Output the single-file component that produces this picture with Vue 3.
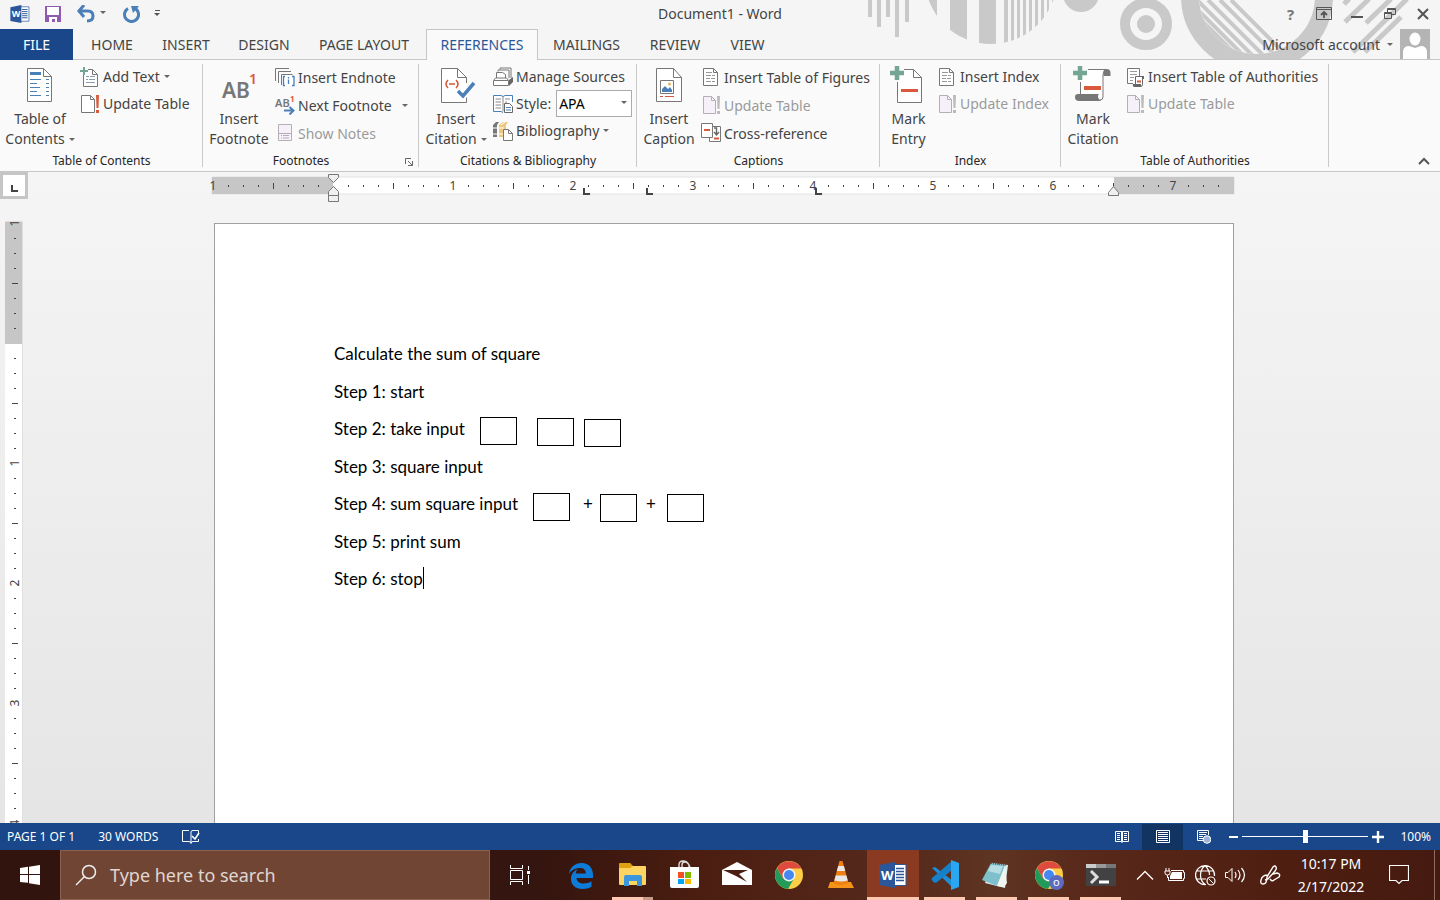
<script setup>
import { ref } from 'vue'

const zoom = ref(50)
const citationStyle = ref('APA')

const tabs = [
  { label: 'HOME', width: 74 },
  { label: 'INSERT', width: 74 },
  { label: 'DESIGN', width: 82 },
  { label: 'PAGE LAYOUT', width: 118 },
  { label: 'REFERENCES', width: 112, active: true },
  { label: 'MAILINGS', width: 97 },
  { label: 'REVIEW', width: 80 },
  { label: 'VIEW', width: 65 },
]

const groups = [
  {
    name: 'Table of Contents', width: 203, bigWidth: 80, rowHeight: 27,
    big: { icon: 'toc', lines: ['Table of', 'Contents'], drop: true },
    items: [
      { icon: 'add-text', label: 'Add Text', drop: true },
      { icon: 'update', label: 'Update Table' },
    ],
  },
  {
    name: 'Footnotes', width: 216, bigWidth: 72, rowHeight: 28, launcher: true,
    big: { icon: 'footnote', lines: ['Insert', 'Footnote'] },
    items: [
      { icon: 'endnote', label: 'Insert Endnote' },
      { icon: 'next-note', label: 'Next Footnote', drop: true, spaced: true },
      { icon: 'show-notes', label: 'Show Notes', disabled: true },
    ],
  },
  {
    name: 'Citations & Bibliography', width: 218, bigWidth: 74, rowHeight: 27,
    big: { icon: 'citation', lines: ['Insert', 'Citation'], drop: true },
    items: [
      { icon: 'sources', label: 'Manage Sources' },
      { icon: 'style', label: 'Style:', select: true },
      { icon: 'biblio', label: 'Bibliography', drop: true },
    ],
  },
  {
    name: 'Captions', width: 243, bigWidth: 64, rowHeight: 28,
    big: { icon: 'caption', lines: ['Insert', 'Caption'] },
    items: [
      { icon: 'lined-page', label: 'Insert Table of Figures' },
      { icon: 'update-off', label: 'Update Table', disabled: true },
      { icon: 'cross-ref', label: 'Cross-reference' },
    ],
  },
  {
    name: 'Index', width: 181, bigWidth: 57, rowHeight: 27,
    big: { icon: 'entry', lines: ['Mark', 'Entry'] },
    items: [
      { icon: 'lined-page', label: 'Insert Index' },
      { icon: 'update-off', label: 'Update Index', disabled: true },
    ],
  },
  {
    name: 'Table of Authorities', width: 268, bigWidth: 64, rowHeight: 27,
    big: { icon: 'mark-citation', lines: ['Mark', 'Citation'] },
    items: [
      { icon: 'authorities', label: 'Insert Table of Authorities' },
      { icon: 'update-off', label: 'Update Table', disabled: true },
    ],
  },
]

const letters = {
  footnote: [
    { t: 'AB', x: 3, y: 33, size: 21, fill: '#777', weight: 600 },
    { t: '1', x: 30, y: 19, size: 14, fill: '#d8593b', weight: 600 },
  ],
  'next-note': [
    { t: 'AB', x: 0, y: 12, size: 11, fill: '#777', weight: 600 },
    { t: '1', x: 15, y: 7, size: 8, fill: '#d8593b', weight: 700 },
  ],
  word: [{ t: 'W', x: 4, y: 21, size: 13, fill: '#fff', weight: 700 }],
  'chrome-user': [{ t: 'o', x: 20, y: 27, size: 11, fill: '#fff', weight: 400 }],
}

function marks(from, to) {
  const list = []
  for (let j = from; j <= to; j++) {
    if (j === 0) continue
    list.push({
      pos: j * 15,
      kind: j % 8 === 0 ? 'number' : j % 4 === 0 ? 'half' : 'dot',
      label: Math.abs(j / 8),
    })
  }
  return list
}
const hMarks = marks(-8, 59)
const vMarks = marks(-8, 32)
const tabStops = [379, 442, 611]

const lines = [
  'Calculate the sum of square',
  'Step 1: start',
  'Step 2: take input',
  'Step 3: square input',
  'Step 4: sum square input',
  'Step 5: print sum',
  'Step 6: stop',
]
const shapes = [
  { x: 146, y: 75 }, { x: 203, y: 76 }, { x: 250, y: 77 },
  { x: 199, y: 151 }, { x: 266, y: 152 }, { x: 333, y: 152 },
]

const apps = [
  { id: 'edge', name: 'Microsoft Edge' },
  { id: 'explorer', name: 'File Explorer', open: true, stacked: true },
  { id: 'store', name: 'Microsoft Store' },
  { id: 'mail', name: 'Mail' },
  { id: 'chrome', name: 'Google Chrome' },
  { id: 'vlc', name: 'VLC media player' },
  { id: 'word', name: 'Word', open: true, active: true },
  { id: 'code', name: 'Visual Studio Code', open: true },
  { id: 'notepad', name: 'Notepad', open: true },
  { id: 'chrome-user', name: 'Google Chrome profile', open: true },
  { id: 'terminal', name: 'Terminal', open: true },
]
const tray = [
  { id: 'up', name: 'Show hidden icons', width: 30 },
  { id: 'battery', name: 'Battery', width: 30 },
  { id: 'globe', name: 'Network', width: 30 },
  { id: 'sound', name: 'Volume', width: 32 },
  { id: 'pen', name: 'Ink workspace', width: 36 },
]
</script>

<template>
  <div class="window">
    <svg class="symbols" aria-hidden="true">
      <symbol id="toc" viewBox="0 0 40 40"><path d="M7.500 3.500h16l8 8v25h-24z" fill="#fff" stroke="#777"/><path d="M23.500 3.500v8h8" fill="none" stroke="#777"/><path d="M10 7h11v3H10z" fill="#4a7fb8"/><path d="M10 14.500h11M10 18.500h7M10 22.500h10M10 26.500h7M10 30.500h11M26 14.500h3M26 18.500h3M26 22.500h3M26 26.500h3M26 30.500h3" stroke="#4a7fb8"/></symbol>
      <symbol id="citation" viewBox="0 0 40 40"><path d="M30.500 18v-5.500l-9-9h-16v34h25v-5" fill="#fff" stroke="#777"/><path d="M21.500 3.500v9h9" fill="none" stroke="#777"/><path d="M12 15q-4 4 0 8M20 15q4 4 0 8M13 19h6" fill="none" stroke="#d8593b" stroke-width="1.600"/><path d="M22 26l5 5 11-13" fill="none" stroke="#4a7fb8" stroke-width="3.500"/></symbol>
      <symbol id="caption" viewBox="0 0 40 40"><path d="M7.500 3.500h17l8 9v24h-25z" fill="#fff" stroke="#777"/><path d="M24.500 3.500v9h8" fill="none" stroke="#777"/><path d="M11.500 15.500h13v13h-13z" fill="#fff" stroke="#777"/><circle cx="20.500" cy="19" r="1.600" fill="#e9b665"/><path d="M13 27v-3l3-3 3 3 2-2 2 3v2z" fill="#4a7fb8"/><path d="M11 31.500h3M16 31.500h9" stroke="#d8593b"/></symbol>
      <symbol id="entry" viewBox="0 0 40 40"><path d="M8.500 17v20.500h24v-25l-8-8H15" fill="#fff" stroke="#777"/><path d="M24.500 4.500v8h8" fill="none" stroke="#777"/><path d="M8 1v14M1 8h14" stroke="#75a593" stroke-width="4.500"/><path d="M12 24h17v3H12z" fill="#d8593b"/></symbol>
      <symbol id="mark-citation" viewBox="0 0 40 40"><path d="M7.500 17v15h19q4 0 4-5V4.500H15z" fill="#fff"/><path d="M7.500 17v13M15 4.500h18q-3 2-3 5V32q0 3-3 3" fill="none" stroke="#777"/><path d="M30.500 11V7q0-3 3-3 4 0 4 4v3z" fill="#777"/><path d="M5 29h21q-3 3 2 7H6q-4 0-4-4 0-3 3-3z" fill="#777"/><path d="M7 1v14M0 8h14" stroke="#75a593" stroke-width="4.500"/><path d="M11 21h17v4H11z" fill="#d8593b"/></symbol>

      <symbol id="add-text" viewBox="0 0 20 20"><path d="M3.500 8v11.500h14v-12l-5-5H8" fill="#fff" stroke="#777"/><path d="M12.500 2.500v5h5" fill="none" stroke="#777"/><path d="M6 9.500h3M10 9.500h5M6 12.500h2M9 12.500h6M6 15.500h9" stroke="#8d9cad"/><path d="M4 0v8M0 4h8" stroke="#75a593" stroke-width="2"/></symbol>
      <symbol id="update" viewBox="0 0 20 20"><path d="M1.500 1.500h9l4 4v13h-13z" fill="#fff" stroke="#777"/><path d="M10.500 1.500v4h4" fill="none" stroke="#777"/><path d="M16 1h3l-.5 13h-2z" fill="#d8593b"/><path d="M16 16h3v3h-3z" fill="#d8593b"/></symbol>
      <symbol id="update-off" viewBox="0 0 20 20"><path d="M2.500 1.500h8l4 4v13h-12z" fill="#f6f0f8" stroke="#b5aeb8"/><path d="M10.500 1.500v4h4" fill="none" stroke="#b5aeb8"/><path d="M16 1h3l-.5 13h-2z" fill="#bbb"/><path d="M16 16h3v3h-3z" fill="#bbb"/></symbol>
      <symbol id="endnote" viewBox="0 0 20 20"><path d="M.5 14V1.500H14M3.500 16V4.500H16M6.500 18V7.500h11" fill="none" stroke="#777"/><path d="M7 8h11v11H7z" fill="#fff"/><path d="M10 9.500H8.500v9H10M17 9.500h2v9h-2M13.500 10v1.500M13.500 12.500V17" fill="none" stroke="#4a7fb8" stroke-width="1.300"/></symbol>
      <symbol id="next-note" viewBox="0 0 20 20"><path d="M9 15.500h9M14.500 12L18.500 15.500l-4 4" fill="none" stroke="#4a7fb8" stroke-width="2"/></symbol>
      <symbol id="show-notes" viewBox="0 0 20 20"><path d="M3.500 1.500h13v16h-13z" fill="#f6f0f8" stroke="#b5aeb8"/><path d="M4 10.500h12M6 12.500h1M8 12.500h6M6 15h1M8 15h6" stroke="#b5aeb8"/></symbol>
      <symbol id="sources" viewBox="0 0 20 20"><path d="M7 2.500V1h11v10M5 4.500V3h11v8" fill="none" stroke="#777"/><path d="M3.500 11V5.500h6l3 2V11" fill="#fff" stroke="#777"/><path d="M.5 18.500v-5l2-2.500h11l2 2.500v5zM1 13.500h14" fill="#fff" stroke="#777"/><path d="M16 13l4-3v5l-4 4z" fill="#666"/></symbol>
      <symbol id="style" viewBox="0 0 20 20"><path d="M10 18.500l-2-1H.5v-16H8l2 1 2-1h7.500V8" fill="#fff" stroke="#4a7fb8"/><path d="M10 2.500v15M2.500 5H8M2.500 8H8M2.500 11H8M2.500 14H8M12 5h5M12 8h2" fill="none" stroke="#888"/><path d="M11.500 9.500h5l3 3v6h-8z" fill="#fff" stroke="#666"/><path d="M13 13.500h5M13 16h5" stroke="#4a7fb8"/></symbol>
      <symbol id="biblio" viewBox="0 0 20 20"><path d="M0 4l3-3h3L4 4v12H0z" fill="#777"/><path d="M0 7h5M0 13h5" stroke="#fff"/><path d="M6 4l4-3h5l-2 3v12H6z" fill="#efc67e"/><path d="M6 7h5M6 13h5M8 4l4-3" stroke="#fff"/><path d="M10.500 8.500h5l4 4v7h-9z" fill="#fff" stroke="#777"/><path d="M15.500 8.500v4h4" fill="none" stroke="#777"/></symbol>
      <symbol id="lined-page" viewBox="0 0 20 20"><path d="M2.500 1.500h10l4 4v13h-14z" fill="#fff" stroke="#777"/><path d="M12.500 1.500v4h4" fill="none" stroke="#777"/><path d="M5 5.500h6M5 8.500h5M11 8.500h3M5 11.500h4M10 11.500h4M5 14.500h5M11 14.500h3" stroke="#999"/></symbol>
      <symbol id="cross-ref" viewBox="0 0 20 20"><path d="M8.500 18.500v-15h11v15z" fill="#fff" stroke="#777"/><path d="M.5.500h11v14H.5z" fill="#fff" stroke="#777"/><path d="M3 7h6" stroke="#d8593b" stroke-width="2"/><path d="M13 15.500h5" stroke="#d8593b" stroke-width="2"/><path d="M13 5h2.500v7M13 9l2.500 3L18 9" fill="none" stroke="#666" stroke-width="1.400"/></symbol>
      <symbol id="authorities" viewBox="0 0 20 20"><path d="M8 16.500H2.500v-15h12V9" fill="#fff" stroke="#777"/><path d="M5 4.500h7M5 7.500h7M5 10.500h4M5 13.500h3" stroke="#999"/><path d="M10.500 18V9.500h7v8q0 2-2 2H9" fill="#fff" stroke="#666"/><path d="M8 17h8v3H9q-2-1-1-3zM17 9h2v3h-2z" fill="#666"/><path d="M12 14.500h4" stroke="#d8593b" stroke-width="2"/></symbol>

      <symbol id="edge" viewBox="0 0 32 32"><path d="M4 15C5 8 10 4 16.500 4 24 4 28 9.500 28 16v3H11.500c.3 4 3.500 5.500 7 5.500 3 0 5.500-.8 8-2.200v5.500C24 29.300 21 30 17.500 30 10.500 30 6 26 6 20c0-4.500 2.500-8 6.500-9.700-1 1.200-1.600 2.700-1.700 4.200h10c0-3.500-2-5.500-6-5.500C10 9 6 11.500 4 15z" fill="#0c7cd8"/></symbol>
      <symbol id="explorer" viewBox="0 0 32 32"><path d="M2 5q0-1 1-1h10q1 0 1 1l2 2v4H2z" fill="#e0a210"/><path d="M2 9h11l3-2h12q1 0 1 1v17q0 1-1 1H3q-1 0-1-1z" fill="#fcd462"/><path d="M7 27v-9q0-2 2-2h14q2 0 2 2v9h-5v-5h-8v5z" fill="#3c96dc"/></symbol>
      <symbol id="store" viewBox="0 0 32 32"><path d="M10 9V6q0-4 4-4t6 4v3M13 9V6q0-3 3-3t5 5" fill="none" stroke="#ddd" stroke-width="1.400"/><path d="M1 8h29v19q0 2-2 2H3q-2 0-2-2z" fill="#fff"/><path d="M9 13h6v6H9z" fill="#f25022"/><path d="M16 13h6v6h-6z" fill="#7fba00"/><path d="M9 20h6v5H9z" fill="#00a4ef"/><path d="M16 20h6v5h-6z" fill="#ffb900"/></symbol>
      <symbol id="mail" viewBox="0 0 32 32"><path d="M1 11L16 3l15 8v15H1z" fill="#fff"/><path d="M2 11h25l-9 4 8 8-11-6z" fill="#4a1e12"/></symbol>
      <symbol id="chrome" viewBox="0 0 32 32"><circle cx="16" cy="16" r="14" fill="#fbcf45"/><path d="M4 9A14 14 0 0 1 28.200 9.500H16L10 19.500z" fill="#de4a3d"/><path d="M3.900 9A14 14 0 0 0 15 30l6-10.500H10z" fill="#229a5a"/><circle cx="16" cy="16" r="6.500" fill="#f4f4f4"/><circle cx="16" cy="16" r="5" fill="#4688f1"/></symbol>
      <symbol id="vlc" viewBox="0 0 32 32"><path d="M5 23h21l3 6H3z" fill="#f59418"/><path d="M14.500 2h3l6 22q-8 4-15 0z" fill="#f08010"/><path d="M13.300 7h5.600l1.300 5h-8.400zM10.800 16.500h10.600l1.300 5q-6 2-13.300 0z" fill="#e8e8e8"/></symbol>
      <symbol id="word" viewBox="0 0 32 32"><path d="M16 5.500h13v21H16z" fill="#fff" stroke="#2b579a"/><path d="M19 9.500h8M19 12.500h8M19 15.500h8M19 18.500h8M19 21.500h8" stroke="#2b579a" stroke-width="1.400"/><path d="M2 6l16-3v26L2 26z" fill="#2b579a"/></symbol>
      <symbol id="code" viewBox="0 0 32 32"><path d="M3 9l20 19 1-6L6 8z" fill="#1d8fd8"/><path d="M3 22L23 2l1 8L6 24z" fill="#0a74bc"/><path d="M2.500 20.500l3 3 2 0L23 11V2L3 19z" fill="#1680c8"/><path d="M22 1l8 3v24l-8 3z" fill="#2ba6f0"/></symbol>
      <symbol id="notepad" viewBox="0 0 32 32"><path d="M11 4l16 2-3 23-20-5z" fill="#dceff0"/><path d="M10 4l14 2-8 21-15-6z" fill="#7fc0cd"/><path d="M10 6l12 1-3 8-12-3z" fill="#b7dde2"/><path d="M24 8l2 16-3 4-7-1z" fill="#f4f4ee"/><path d="M10 4l16 2" stroke="#555" stroke-width="2" stroke-dasharray="1 1"/></symbol>
      <symbol id="chrome-user" viewBox="0 0 32 32"><use href="#chrome"/><circle cx="23.500" cy="23.500" r="7.500" fill="#5c6bc0"/></symbol>
      <symbol id="terminal" viewBox="0 0 32 32"><path d="M1 5h30v22H1z" fill="#424242"/><path d="M1 5h10v4H1z" fill="#ccc"/><path d="M11 5h10v4H11z" fill="#999"/><path d="M21 5h10v4H21z" fill="#777"/><path d="M6 12l6 6-6 6" fill="none" stroke="#ddd" stroke-width="3"/><path d="M14 23h10" stroke="#fff" stroke-width="3"/></symbol>

      <symbol id="up" viewBox="0 0 24 24"><path d="M4 16.500l8-8 8 8" fill="none" stroke="#fff" stroke-width="1.300"/></symbol>
      <symbol id="battery" viewBox="0 0 24 24"><path d="M8 7.500h12.500v2h1v6h-1v2h-15V14" fill="none" stroke="#fff"/><path d="M9 9h10v7H7v-3z" fill="#fff"/><path d="M3 5v3M6 5v3M2 8h5v2q0 2-2.500 2T2 10zM4.500 12v3" fill="none" stroke="#fff"/></symbol>
      <symbol id="globe" viewBox="0 0 24 24"><path d="M13 21.500A9.500 9.500 0 1 1 21.500 13M12 2.500c-6 5-6 14 0 19M12 2.500c3 3 4.500 6 4.500 9.500M3.500 8h17M3.500 16H13" fill="none" stroke="#fff" stroke-width="1.200"/><circle cx="18" cy="18" r="4" fill="none" stroke="#fff" stroke-width="1.200"/><path d="M15.500 15.500l5 5" stroke="#fff"/></symbol>
      <symbol id="sound" viewBox="0 0 24 24"><path d="M1.500 9.500H4l4-4v13l-4-4H1.500z" fill="none" stroke="#fff"/><path d="M11 9q2 3 0 6M14 7q4 5 0 10M17.500 5q6 7 0 14" fill="none" stroke="#fff" stroke-width="1.200"/></symbol>
      <symbol id="pen" viewBox="0 0 24 24"><path d="M10 12q-6 0-7 5-1 4 2 4 4 0 4-7L15 4q2-2 3 0t-1 4l-7 8-3 1M12 16q2 3 4 1l5-3q2-3-2-4l-4 1" fill="none" stroke="#fff" stroke-width="1.400"/></symbol>
    </svg>

    <header class="top">
      <svg class="decor" viewBox="0 0 580 59" aria-hidden="true">
        <defs>
          <clipPath id="disc"><circle cx="131" cy="-22" r="66" /></clipPath>
          <clipPath id="hoop"><circle cx="397" cy="-4" r="58" /></clipPath>
        </defs>
        <g fill="#c9c9c9">
          <path d="M8 0h4v17H8zM17 0h4v27h-4zM26 0h4v17h-4zM35 0h4v37h-4zM45 0h4v22h-4z" />
          <path clip-path="url(#disc)" d="M60 0h17v50H60zM90 0h17v50H90zM119 0h17v50h-17zM144 0h4v50h-4zM151 0h3v50h-3zM157 0h3v50h-3zM163 0h3v50h-3zM169 0h3v50h-3zM175 0h3v50h-3zM181 0h3v50h-3zM187 0h2v50h-2zM192 0h2v50h-2z" />
          <circle cx="221" cy="-6" r="18" />
          <circle cx="286" cy="24" r="9" />
          <circle cx="286" cy="24" r="21" fill="none" stroke="#c9c9c9" stroke-width="10" />
          <circle cx="397" cy="-4" r="67" fill="none" stroke="#c9c9c9" stroke-width="18" />
        </g>
        <g clip-path="url(#hoop)">
          <path d="M340 16l44 44h-44z" fill="#c9c9c9" />
          <path d="M328 0l60 60M337 0l60 60M348 0l60 60M360 0l60 60M371 0l60 60" stroke="#c9c9c9" stroke-width="4" />
        </g>
        <path d="M484 4l5-5M485 22l24-23M506 23l25-24M493 52l54-53M505 52l36-35" stroke="#c9c9c9" stroke-width="5" />
      </svg>

      <div class="titlebar">
        <div class="quick">
          <button class="q-word" aria-label="Word menu"><svg width="22" height="22" viewBox="0 0 32 32"><use href="#word" /><text v-for="l in letters.word" :key="l.t" :x="l.x" :y="l.y" :font-size="l.size" :font-weight="l.weight" :fill="l.fill">{{ l.t }}</text></svg></button>
          <button aria-label="Save"><svg width="16" height="16" viewBox="0 0 16 16"><path d="M0 0h16v16H0z" fill="#8e5bb0" /><path d="M2 1h12v8H2zM4 11h8v5h-2v-3H7v3H4z" fill="#fff" /></svg></button>
          <button class="q-undo" aria-label="Undo"><svg width="30" height="18" viewBox="0 0 30 18"><path d="M2 6h10q5 0 5 5t-6 5" fill="none" stroke="#4a7fb8" stroke-width="3" /><path d="M8 0L3 6l5 6" fill="none" stroke="#4a7fb8" stroke-width="3" /><path d="M24 6h6l-3 3z" fill="#666" /></svg></button>
          <button class="q-redo" aria-label="Repeat"><svg width="18" height="18" viewBox="0 0 18 18"><path d="M6 3.500a7 7 0 1 0 6-.5" fill="none" stroke="#4a7fb8" stroke-width="3" /><path d="M9 1h8l-6 7z" fill="#4a7fb8" /></svg></button>
          <button class="q-more" aria-label="Customize toolbar"><svg width="7" height="7" viewBox="0 0 7 7"><path d="M1 .5h5" stroke="#555" /><path d="M0 3h6L3 6z" fill="#555" /></svg></button>
        </div>
        <h1>Document1 - Word</h1>
        <div class="controls">
          <button aria-label="Help"><b>?</b></button>
          <button aria-label="Ribbon display options"><svg width="16" height="14" viewBox="0 0 16 14"><path d="M.5.500h15v12H.5zM0 2.500h16" fill="none" stroke="#555" /><path d="M8 11V5M5 8l3-3 3 3" fill="none" stroke="#555" stroke-width="1.800" /></svg></button>
          <button aria-label="Minimize"><svg width="12" height="12" viewBox="0 0 12 12"><path d="M0 9h12" stroke="#555" stroke-width="2" /></svg></button>
          <button aria-label="Restore"><svg width="12" height="12" viewBox="0 0 12 12"><path d="M3.500 4V.5h8v6H8M3 1.500h9M.5 4.500h7v6h-7zM0 5.500h8" fill="none" stroke="#555" /></svg></button>
          <button aria-label="Close"><svg width="12" height="12" viewBox="0 0 12 12"><path d="M1 1l10 10M11 1L1 11" stroke="#555" stroke-width="2" /></svg></button>
        </div>
      </div>

      <nav class="tabs">
        <button class="file">FILE</button>
        <button v-for="t in tabs" :key="t.label" class="tab" :class="{ active: t.active }" :style="{ width: t.width + 'px' }">{{ t.label }}</button>
        <button class="account">Microsoft account<i class="caret"></i>
          <svg width="30" height="30" viewBox="0 0 30 30"><path d="M0 0h30v30H0z" fill="#b4b4b4" /><ellipse cx="15" cy="10" rx="5.500" ry="6.500" fill="#fff" /><path d="M3 30v-8q1-5 6-5l6 2 6-2q5 0 6 5v8z" fill="#fff" /></svg>
        </button>
      </nav>
    </header>

    <section class="ribbon">
      <div v-for="g in groups" :key="g.name" class="group" :style="{ width: g.width + 'px' }">
        <div class="group-body">
          <button class="big" :style="{ width: g.bigWidth + 'px' }">
            <svg width="40" height="40"><use :href="'#' + g.big.icon" /><text v-for="l in letters[g.big.icon]" :key="l.t" :x="l.x" :y="l.y" :font-size="l.size" :font-weight="l.weight" :fill="l.fill">{{ l.t }}</text></svg>
            <span>{{ g.big.lines[0] }}</span>
            <span>{{ g.big.lines[1] }}<i v-if="g.big.drop" class="caret"></i></span>
          </button>
          <div class="list">
            <template v-for="item in g.items" :key="item.label">
              <div v-if="item.select" class="row" :style="{ height: g.rowHeight + 'px' }">
                <svg width="20" height="20"><use :href="'#' + item.icon" /></svg>
                <label for="citation-style">{{ item.label }}</label>
                <span class="select-wrap">
                  <select id="citation-style" v-model="citationStyle"><option>APA</option></select>
                  <i class="caret"></i>
                </span>
              </div>
              <button v-else class="row" :disabled="item.disabled" :style="{ height: g.rowHeight + 'px' }">
                <svg width="20" height="20"><text v-for="l in letters[item.icon]" :key="l.t" :x="l.x" :y="l.y" :font-size="l.size" :font-weight="l.weight" :fill="l.fill">{{ l.t }}</text><use :href="'#' + item.icon" /></svg>
                <span>{{ item.label }}</span>
                <i v-if="item.drop" class="caret" :class="{ spaced: item.spaced }"></i>
              </button>
            </template>
          </div>
        </div>
        <div class="group-name" :class="{ inset: g.launcher }">{{ g.name }}</div>
        <button v-if="g.launcher" class="launcher" aria-label="Footnote options"><svg width="8" height="8" viewBox="0 0 8 8"><path d="M.5 6V.5H6M3 3l4 4M7.500 3v4.500H3" fill="none" stroke="#666" /></svg></button>
      </div>
      <button class="collapse" aria-label="Collapse the ribbon"><svg width="12" height="8" viewBox="0 0 12 8"><path d="M1 7l5-5 5 5" fill="none" stroke="#555" stroke-width="2" /></svg></button>
    </section>

    <main class="workspace">
      <button class="corner" aria-label="Tab selector"><span></span></button>
      <svg class="h-ruler" width="1040" height="32" viewBox="0 0 1040 32">
        <path d="M8 5h1022v17H8z" fill="#fff" stroke="#e2e2e2" />
        <path d="M8 5h121v17H8zM910 5h120v17H910z" fill="#c6c6c6" />
        <g transform="translate(129 0)">
          <template v-for="m in hMarks" :key="m.pos">
            <text v-if="m.kind === 'number'" :x="m.pos" y="18" text-anchor="middle" class="num">{{ m.label }}</text>
            <rect v-else-if="m.kind === 'half'" :x="m.pos" y="11" width="1" height="6" fill="#444" />
            <rect v-else :x="m.pos" y="13" width="1" height="2" fill="#444" />
          </template>
        </g>
        <path v-for="x in tabStops" :key="x" :d="`M${x + 1} 16v6h6`" fill="none" stroke="#444" stroke-width="2" />
        <g fill="#f0f0f0" stroke="#777">
          <path d="M124.500 2.500h10v3l-5 5-5-5z" />
          <path d="M124.500 23.500v-4l5-5 5 5v4zM124.500 23.500h10v6h-10z" />
          <path d="M904.500 23.500v-3l5-6 5 6v3z" />
        </g>
      </svg>
      <svg class="v-ruler" width="30" height="100%">
        <rect x="5" y="0" width="18" height="100%" fill="#e0e0e0" />
        <rect x="5" y="1" width="17" height="100%" fill="#fff" />
        <rect x="5" y="1" width="17" height="122" fill="#c6c6c6" />
        <g transform="translate(0 122)">
          <template v-for="m in vMarks" :key="m.pos">
            <text v-if="m.kind === 'number'" :transform="`translate(19 ${m.pos}) rotate(-90)`" text-anchor="middle" class="num">{{ m.label }}</text>
            <rect v-else-if="m.kind === 'half'" x="12" :y="m.pos" width="6" height="1" fill="#444" />
            <rect v-else x="14" :y="m.pos" width="2" height="1" fill="#444" />
          </template>
        </g>
      </svg>
      <div class="canvas">
        <article class="page">
          <div class="text">
            <p v-for="(line, i) in lines" :key="line">
              <span>{{ line }}</span>
              <span v-if="i === 4" class="plus">+</span>
              <span v-if="i === 4" class="plus next">+</span>
              <span v-if="i === 6" class="cursor"></span>
            </p>
            <div v-for="s in shapes" :key="s.x" class="shape" :style="{ left: s.x + 'px', top: s.y + 'px' }"></div>
          </div>
        </article>
      </div>
    </main>

    <footer class="status">
      <button class="pages">PAGE 1 OF 1</button>
      <button class="words">30 WORDS</button>
      <button aria-label="Proofing"><svg width="18" height="16" viewBox="0 0 18 16"><path d="M7 1.500H.5v11H7q2 0 2 2 0-2 2-2h5.500V10M9 14V3q0-1.500 2-1.500h5.500V4" fill="none" stroke="#fff" /><path d="M10 7l3 3 4-6" fill="none" stroke="#fff" stroke-width="1.600" /></svg></button>
      <div class="views">
        <button aria-label="Read mode"><svg width="14" height="14" viewBox="0 0 14 14"><path d="M.5 1.500h6v10h-6zM7.500 1.500h6v10h-6zM7 1v12M2 3.500h3M2 5.500h3M2 7.500h3M2 9.500h3M9 3.500h3M9 5.500h3M9 7.500h3M9 9.500h3" fill="none" stroke="#fff" /></svg></button>
        <button class="on" aria-label="Print layout"><svg width="14" height="14" viewBox="0 0 14 14"><path d="M.5.500h13v12H.5zM2 2.500h10M2 4.500h10M2 6.500h10M2 8.500h10M2 10.500h10" fill="none" stroke="#fff" /></svg></button>
        <button aria-label="Web layout"><svg width="14" height="14" viewBox="0 0 14 14"><path d="M6 10.500H.5V.5h11V5M2 2.500h8M2 4.500h7M2 6.500h4M2 8.500h4" fill="none" stroke="#fff" /><circle cx="10" cy="9.500" r="3.800" fill="#9db4d6" stroke="#fff" /></svg></button>
      </div>
      <button class="step" aria-label="Zoom out"><svg width="9" height="10" viewBox="0 0 9 10"><path d="M0 5h9" stroke="#fff" stroke-width="2" /></svg></button>
      <input v-model="zoom" class="slider" type="range" min="0" max="100" aria-label="Zoom" />
      <button class="step" aria-label="Zoom in"><svg width="12" height="12" viewBox="0 0 12 12"><path d="M0 6h12M6 0v12" stroke="#fff" stroke-width="2.400" /></svg></button>
      <button class="percent">100%</button>
    </footer>

    <div class="taskbar">
      <button class="start" aria-label="Start"><svg width="20" height="20" viewBox="0 0 20 20"><path d="M0 3l8-1.200V9H0zM9 1.700L20 0v9H9zM0 10h8v7.800L0 17zM9 10h11v10L9 18.300z" fill="#fff" /></svg></button>
      <div class="search">
        <svg width="22" height="22" viewBox="0 0 22 22"><circle cx="14" cy="8" r="6.500" fill="none" stroke="#eee" stroke-width="1.500" /><path d="M9.500 12.500L1 21" stroke="#eee" stroke-width="1.500" /></svg>
        <input type="text" placeholder="Type here to search" aria-label="Type here to search" />
      </div>
      <button class="taskview" aria-label="Task view"><svg width="20" height="20" viewBox="0 0 20 20"><path d="M.5 0v3.500h12V0M.5 5.500h12v9H.5zM.5 20v-3.500h12V20M18.500 1v4M18.500 10v9" fill="none" stroke="#fff" /><path d="M17 6h3v3h-3z" fill="#fff" /></svg></button>
      <button v-for="a in apps" :key="a.id" class="app" :class="{ open: a.open, current: a.active, stacked: a.stacked }" :aria-label="a.name">
        <svg width="32" height="32" viewBox="0 0 32 32"><use :href="'#' + a.id" /><text v-for="l in letters[a.id]" :key="l.t" :x="l.x" :y="l.y" :font-size="l.size" :font-weight="l.weight" :fill="l.fill">{{ l.t }}</text></svg>
      </button>
      <div class="tray">
        <button v-for="t in tray" :key="t.id" :aria-label="t.name" :style="{ width: t.width + 'px' }"><svg width="24" height="24"><use :href="'#' + t.id" /></svg></button>
        <button class="clock"><span>10:17 PM</span><span>2/17/2022</span></button>
        <button class="notify" aria-label="Notifications"><svg width="20" height="20" viewBox="0 0 20 20"><path d="M.5.500h19v15H13l-3 3-3-3H.5z" fill="none" stroke="#fff" stroke-width="1.200" /></svg></button>
        <button class="desktop" aria-label="Show desktop"></button>
      </div>
    </div>
  </div>
</template>

<style>
body {
  overflow: hidden;
}
</style>

<style scoped>
.window {
  display: flex;
  flex-direction: column;
  height: 100vh;
  overflow: hidden;
  font-family: "Noto Sans", "Open Sans", sans-serif;
  font-size: 14px;
  color: #444;
  background: #f5f5f5;
}
* {
  box-sizing: border-box;
}
.symbols {
  position: absolute;
  width: 0;
  height: 0;
}
button {
  display: flex;
  align-items: center;
  justify-content: center;
  padding: 0;
  border: 0;
  background: none;
  font: inherit;
  color: inherit;
  white-space: nowrap;
}
svg {
  flex: none;
  display: block;
}
.caret {
  display: inline-block;
  flex: none;
  border: 3px solid transparent;
  border-top-color: #666;
  border-bottom: 0;
}
.top {
  position: relative;
  flex: none;
  border-bottom: 1px solid #c6c6c6;
}
.decor {
  position: absolute;
  right: 0;
  top: 0;
  width: 580px;
  height: 59px;
}
.titlebar {
  position: relative;
  display: grid;
  grid-template-columns: 1fr auto 1fr;
  height: 29px;
  padding-bottom: 2px;
  align-items: center;
}
.titlebar h1 {
  margin: 0;
  font-size: 14px;
  font-weight: 400;
}
.quick {
  display: flex;
  align-items: center;
  padding-left: 9px;
}
.q-word {
  margin-right: 14px;
}
.q-undo {
  margin-left: 15px;
}
.q-redo {
  margin-left: 16px;
}
.q-more {
  margin-left: 14px;
}
.controls {
  display: flex;
  justify-content: flex-end;
  padding-right: 1px;
}
.controls button {
  width: 33px;
  height: 26px;
}
.controls b {
  font-size: 15px;
  color: #777;
}
.tabs {
  position: relative;
  display: flex;
  height: 31px;
  margin-bottom: -1px;
  align-items: flex-start;
}
.file {
  width: 73px;
  height: 31px;
  margin-right: 2px;
  color: #fff;
  background: #19478a;
}
.tab {
  height: 31px;
}
.tab.active {
  margin-left: 3px;
  padding-bottom: 1px;
  color: #2b579a;
  background: #fafafa;
  border: 1px solid #c6c6c6;
  border-bottom: 0;
}
.account {
  height: 30px;
  margin-left: auto;
  margin-right: 10px;
  gap: 7px;
}
.ribbon {
  display: flex;
  flex: none;
  height: 112px;
  background: #fafafa;
  border-bottom: 1px solid #c6c6c6;
}
.group {
  position: relative;
  flex: none;
  display: flex;
  flex-direction: column;
  padding-top: 3px;
}
.group::after {
  content: "";
  position: absolute;
  right: 0;
  top: 4px;
  bottom: 4px;
  width: 1px;
  background: #c9c9c9;
}
.group-body {
  display: flex;
  flex: 1;
}
.big {
  flex: none;
  flex-direction: column;
  justify-content: flex-start;
  padding-top: 2px;
  line-height: 20px;
}
.big svg {
  margin-bottom: 4px;
}
.big .caret {
  margin-left: 4px;
  vertical-align: 3px;
}
.row {
  justify-content: flex-start;
  display: flex;
  align-items: center;
}
.row svg {
  margin-right: 3px;
}
.row .caret {
  margin-left: 4px;
}
.row .spaced {
  margin-left: 10px;
}
.row:disabled {
  color: #9a9a9a;
}
.select-wrap {
  position: relative;
  width: 76px;
  height: 27px;
  margin-left: 5px;
}
.select-wrap select {
  appearance: none;
  width: 100%;
  height: 100%;
  padding: 0 2px;
  border: 1px solid #ababab;
  border-radius: 0;
  background: #fff;
  font: inherit;
  color: #000;
}
.select-wrap .caret {
  position: absolute;
  right: 5px;
  top: 11px;
}
.group-name {
  height: 20px;
  line-height: 20px;
  font-size: 12px;
  text-align: center;
  color: #262626;
}
.group-name.inset {
  padding-right: 20px;
}
.launcher {
  position: absolute;
  right: 6px;
  bottom: 5px;
}
.collapse {
  margin: auto 10px 6px auto;
}
.workspace {
  flex: 1;
  min-height: 0;
  display: grid;
  grid-template-columns: 30px 1fr 22px;
  grid-template-rows: 49px 1fr;
  overflow: hidden;
  background: linear-gradient(#f5f5f5, #e5e5e5);
}
.corner {
  width: 28px;
  height: 27px;
  border: 3px solid #c6c6c6;
  background: #fff;
}
.corner span {
  width: 7px;
  height: 7px;
  margin-top: 5px;
  border: 2px solid #444;
  border-top: 0;
  border-right: 0;
}
.h-ruler {
  justify-self: center;
}
.num {
  font-size: 12px;
  fill: #444;
}
.v-ruler {
  grid-column: 1;
  grid-row: 2;
  overflow: hidden;
}
.canvas {
  grid-column: 2;
  grid-row: 2;
  padding-top: 2px;
  overflow: hidden;
}
.page {
  width: 1020px;
  max-width: 100%;
  height: 1320px;
  margin: 0 auto;
  padding: 118px 119px;
  background: #fff;
  border: 1px solid #a0a0a0;
}
.text {
  position: relative;
  display: flex;
  flex-direction: column;
  justify-content: space-between;
  height: 249px;
  font-family: Lato, sans-serif;
  font-size: 17px;
  line-height: 24px;
  color: #000;
}
.text p {
  display: flex;
  margin: 0;
}
.plus {
  margin-left: 65px;
}
.plus.next {
  margin-left: 53px;
}
.cursor {
  width: 1px;
  height: 22px;
  background: #000;
}
.shape {
  position: absolute;
  width: 37px;
  height: 28px;
  border: 1px solid #000;
  background: #fff;
}
.status {
  flex: none;
  display: flex;
  align-items: center;
  height: 27px;
  padding: 0 9px 0 7px;
  font-size: 12px;
  color: #fff;
  background: #19478a;
}
.pages {
  margin-right: 23px;
}
.words {
  margin-right: 24px;
}
.views {
  display: flex;
  height: 26px;
  margin-left: auto;
  margin-right: 5px;
}
.views button {
  width: 41px;
}
.views .on {
  background: #123463;
}
.slider {
  appearance: none;
  width: 126px;
  height: 14px;
  margin: 0 4px;
  background: linear-gradient(#fff, #fff) center / 100% 1px no-repeat;
}
.slider::-webkit-slider-thumb {
  appearance: none;
  width: 5px;
  height: 13px;
  background: #fff;
}
.percent {
  width: 47px;
  justify-content: flex-end;
}
.taskbar {
  flex: none;
  display: flex;
  height: 50px;
  color: #fff;
  background: linear-gradient(90deg, #32140f 0, #35150f 38%, #4a1d10 48%, #55291b 62%, #5e3422 69%, #58281a 76%, #4f1f11 88%, #451a10 100%);
}
.start {
  width: 60px;
}
.search {
  display: flex;
  align-items: center;
  flex: 0 1 430px;
  padding-left: 14px;
  background: #704533;
  border: 1px solid #8b6252;
}
.search input {
  flex: 1;
  min-width: 0;
  padding: 0;
  margin-left: 13px;
  border: 0;
  background: none;
  font: inherit;
  font-size: 18px;
  color: #fff;
}
.search input::placeholder {
  color: #e0d6d2;
}
.taskview {
  width: 60px;
  margin-right: 5px;
}
.app {
  position: relative;
  width: 52px;
}
.app.open::after {
  content: "";
  position: absolute;
  left: 5px;
  right: 6px;
  bottom: 0;
  height: 3px;
  background: #ffc8b2;
}
.app.current {
  background: #8a3a20;
}
.app.current::after {
  left: 0;
  right: 0;
}
.app.stacked::after {
  background: linear-gradient(90deg, #ffc8b2 75%, #c79a87 75%);
}
.tray {
  display: flex;
  margin-left: auto;
}
.clock {
  flex-direction: column;
  width: 86px;
  line-height: 23px;
}
.notify {
  width: 50px;
  margin-right: 10px;
}
.desktop {
  width: 6px;
  border-left: 1px solid #8e6e64;
}
</style>
